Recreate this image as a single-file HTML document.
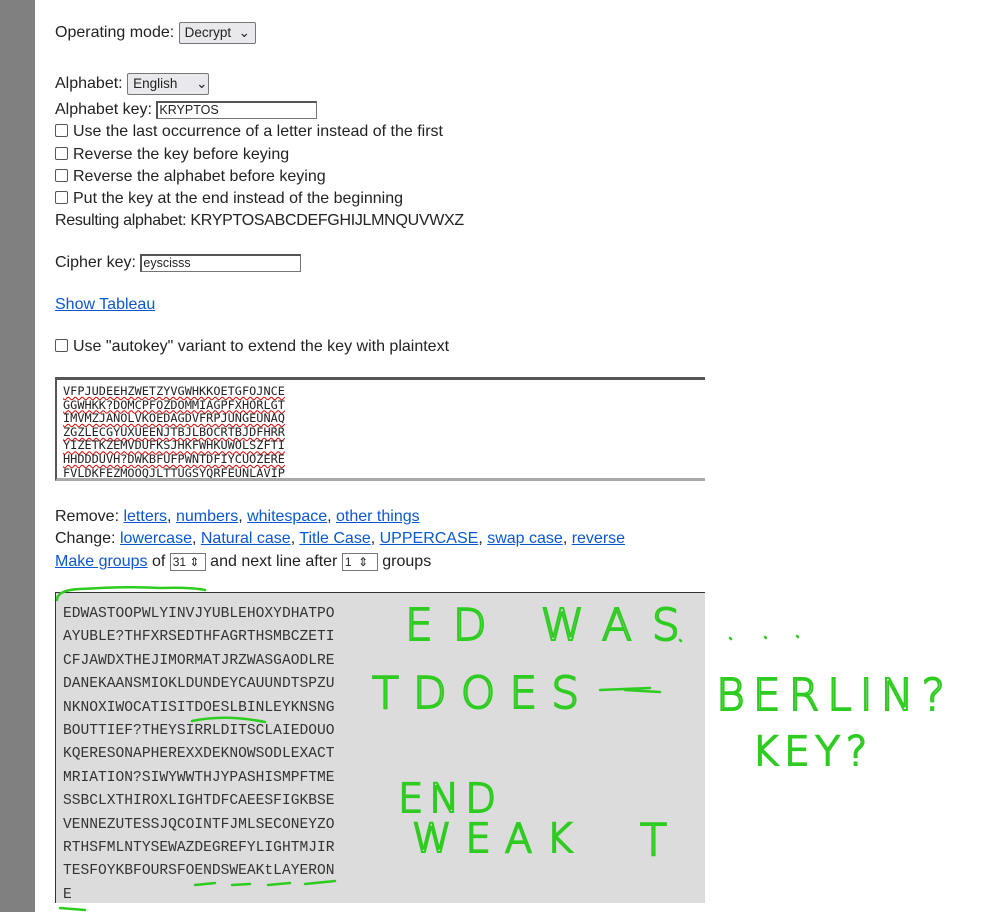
<!DOCTYPE html>
<html><head><meta charset="utf-8"><style>
body{margin:0;width:982px;height:912px;background:#fff;position:relative;overflow:hidden;font-family:"Liberation Sans",sans-serif;font-size:16px;color:#222}
.bar{position:absolute;left:0;top:0;width:35px;height:912px;background:#808080}
.a{position:absolute;left:55px;white-space:nowrap}
.sel{display:inline-block;border:1px solid #767676;background:#e9e9ed;font-size:13.5px;padding:2px 5px;border-radius:2px;vertical-align:middle}
.inp{display:inline-block;border:1px solid #767676;border-top:2px solid #555;border-left:2px solid #555;font-size:12.5px;height:15px;line-height:15px;padding:0 1px;vertical-align:middle;background:#fff}
.cb{display:inline-block;width:11px;height:11px;border:1px solid #555;border-radius:2px;vertical-align:-1px;margin-right:5px;background:#fff}
a{color:#0b57d0;text-decoration:underline}
.ta{position:absolute;left:55px;top:377px;width:650px;height:104px;border-top:3px solid #555;border-left:2px solid #555;border-bottom:3px solid #aaa;overflow:hidden;background:#fff;font-family:"DejaVu Sans Mono",monospace;font-size:11.9px;line-height:13.6px;padding:5px 6px 0;box-sizing:border-box}
.ta div{text-decoration:underline wavy #d00;text-decoration-thickness:1px}
.out{position:absolute;left:55px;top:592px;width:650px;height:311px;background:#dcdcdc;border-top:1px solid #333;border-left:1px solid #333;box-sizing:border-box;font-family:"Liberation Mono",monospace;font-size:14.6px;line-height:23.4px;padding:10px 0 0 7px;color:#333}
.num{display:inline-block;border:1px solid #767676;font-size:12px;width:32px;height:16px;line-height:16px;vertical-align:middle;padding-left:2px}
</style></head><body>
<div class="bar"></div>
<div class="a" style="top:22px">Operating mode: <span class="sel">Decrypt &nbsp;⌄</span></div>
<div class="a" style="top:73px">Alphabet: <span class="sel" style="width:70px">English &nbsp;&nbsp;&nbsp;&nbsp;⌄</span></div>
<div class="a" style="top:101px">Alphabet key: <span class="inp" style="width:156px">KRYPTOS</span></div>
<div class="a" style="top:123px"><span class="cb"></span>Use the last occurrence of a letter instead of the first</div>
<div class="a" style="top:146px"><span class="cb"></span>Reverse the key before keying</div>
<div class="a" style="top:168px"><span class="cb"></span>Reverse the alphabet before keying</div>
<div class="a" style="top:190px"><span class="cb"></span>Put the key at the end instead of the beginning</div>
<div class="a" style="top:212px;letter-spacing:-0.3px">Resulting alphabet: KRYPTOSABCDEFGHIJLMNQUVWXZ</div>
<div class="a" style="top:254px">Cipher key: <span class="inp" style="width:156px">eyscisss</span></div>
<div class="a" style="top:296px"><a>Show Tableau</a></div>
<div class="a" style="top:338px"><span class="cb"></span>Use "autokey" variant to extend the key with plaintext</div>
<div class="ta">
<div>VFPJUDEEHZWETZYVGWHKKOETGFOJNCE</div>
<div>GGWHKK?DOMCPFOZDOMMIAGPFXHORLGT</div>
<div>IMVMZJANOLVKOEDAGDVFRPJUNGEUNAQ</div>
<div>ZGZLECGYUXUEENJTBJLBOCRTBJDFHRR</div>
<div>YIZETKZEMVDUFKSJHKFWHKUWOLSZFTI</div>
<div>HHDDDUVH?DWKBFUFPWNTDFIYCUOZERE</div>
<div>FVLDKFEZMOOQJLTTUGSYQRFEUNLAVIP</div>
</div>
<div class="a" style="top:508px">Remove: <a>letters</a>, <a>numbers</a>, <a>whitespace</a>, <a>other things</a></div>
<div class="a" style="top:530px">Change: <a>lowercase</a>, <a>Natural case</a>, <a>Title Case</a>, <a>UPPERCASE</a>, <a>swap case</a>, <a>reverse</a></div>
<div class="a" style="top:553px"><a>Make groups</a> of <span class="num">31 ⇕</span> and next line after <span class="num">1 &nbsp;⇕</span> groups</div>
<div class="out">
EDWASTOOPWLYINVJYUBLEHOXYDHATPO<br>AYUBLE?THFXRSEDTHFAGRTHSMBCZETI<br>CFJAWDXTHEJIMORMATJRZWASGAODLRE<br>DANEKAANSMIOKLDUNDEYCAUUNDTSPZU<br>NKNOXIWOCATISITDOESLBINLEYKNSNG<br>BOUTTIEF?THEYSIRRLDITSCLAIEDOUO<br>KQERESONAPHEREXXDEKNOWSODLEXACT<br>MRIATION?SIWYWWTHJYPASHISMPFTME<br>SSBCLXTHIROXLIGHTDFCAEESFIGKBSE<br>VENNEZUTESSJQCOINTFJMLSECONEYZO<br>RTHSFMLNTYSEWAZDEGREFYLIGHTMJIR<br>TESFOYKBFOURSFOENDSWEAKtLAYERON<br>E
</div>
<svg style="position:absolute;left:0;top:0" width="982" height="912">
<g fill="none" stroke="#2ecc20" stroke-width="2.5" stroke-linecap="round">
<path d="M57 600 Q57 590 80 589 Q130 586 160 588 Q190 587 205 590"/>
<path d="M60 908 L85 910"/>
<path d="M192 721 Q225 714 265 722"/>
<path d="M195 885 L215 883 M232 885 L250 884 M268 885 L290 883 M305 884 L335 881"/>
<path d="M680 640 l1 1 M730 638 l1 1 M765 637 l1 1 M797 636 l1 1"/>
<path d="M600 690 L650 688 M625 690 L660 692"/>
</g>
<g fill="none" stroke="#2ecc20" stroke-width="2" font-family="'DejaVu Sans',sans-serif" font-weight="200">
<text x="405" y="640" font-size="44" letter-spacing="20">ED WAS</text>
<text x="372" y="708" font-size="44" letter-spacing="14">TDOES</text>
<text x="716" y="710" font-size="44" letter-spacing="8">BERLIN?</text>
<text x="752" y="765" font-size="40" letter-spacing="6">KEY?</text>
<text x="398" y="812" font-size="40" letter-spacing="6">END</text>
<text x="412" y="852" font-size="40" letter-spacing="14">WEAK</text>
<text x="640" y="855" font-size="44">T</text>
</g>
</svg>
</body></html>
